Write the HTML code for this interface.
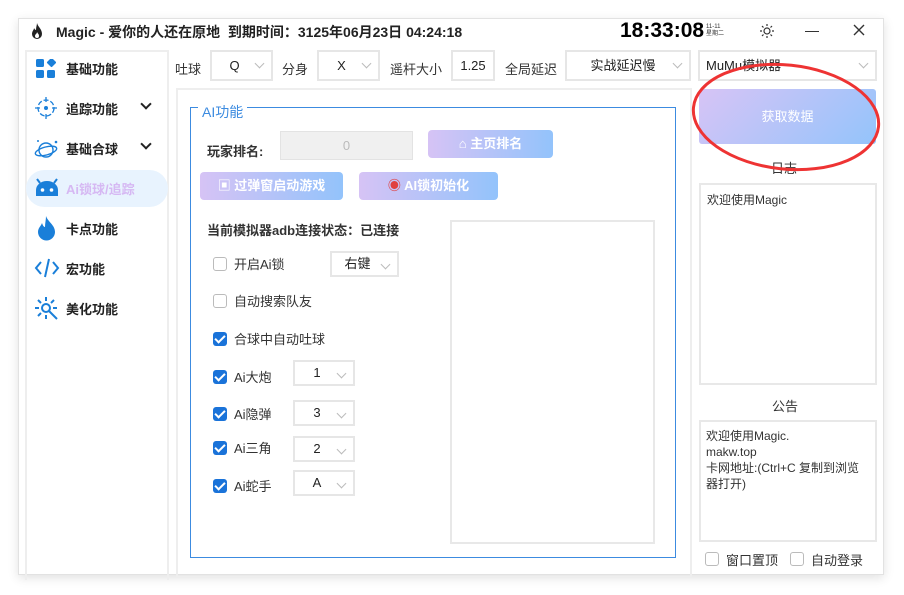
<!DOCTYPE html>
<html><head><meta charset="utf-8"><style>
*{margin:0;padding:0;box-sizing:border-box}
body{width:904px;height:595px;background:#fff;font-family:"Liberation Sans","Noto Sans CJK SC",sans-serif;position:relative;overflow:hidden;color:#222;font-size:13px}
.a{position:absolute}
.win{left:18px;top:18px;width:866px;height:557px;background:#fff;border:1px solid #e2e2e2;box-shadow:0 3px 10px rgba(0,0,0,.12)}
.sel{position:absolute;border:2px solid #e6e6e6;background:#fff;height:31px;font-size:13px;line-height:27px;text-align:center}
.sel:after{content:"";position:absolute;right:8px;top:8px;width:6px;height:6px;border-right:1.3px solid #bbb;border-bottom:1.3px solid #bbb;transform:rotate(45deg)}
.lbl{position:absolute;font-size:13px;color:#333}
.nav{position:absolute;left:66px;font-size:13px;font-weight:bold;color:#222}
.cb{position:absolute;width:14px;height:14px;border:1.5px solid #bbb;border-radius:3px;background:#fff}
.cbk{position:absolute;width:14px;height:14px;border-radius:3px;background:#1a73d9}
.cbk:after{content:"";position:absolute;left:4px;top:1px;width:4px;height:8px;border-right:2px solid #fff;border-bottom:2px solid #fff;transform:rotate(45deg)}
.grad{background:linear-gradient(90deg,#d6c3f5,#93c3fb);color:#fff;font-weight:bold;border-radius:4px;text-align:center;font-size:13px}
.box{position:absolute;border:2px solid #e8e8e8;background:#fff}
</style></head><body>
<div class="a win"></div>
<svg class="a" style="left:30px;top:22px" width="14" height="18" viewBox="0 0 14 18"><path d="M7 1C8 5 12 7 12 12A5 5 0 0 1 2 12C2 9 4 8 4 6C5 8 6 8 6 8C6 5 7 3 7 1Z" fill="#222"/><path d="M7 10C8 12 9 12 9 14A2 2 0 0 1 5 14C5 12 7 12 7 10Z" fill="#fff"/></svg>
<div class="a" style="left:56px;top:22px;font-size:14px;font-weight:bold">Magic - 爱你的人还在原地&nbsp; 到期时间：3125年06月23日 04:24:18</div>
<div class="a" style="left:620px;top:19px;font-size:21px;font-weight:bold;color:#000">18:33:08</div>
<div class="a" style="left:706px;top:24px;font-size:6px;line-height:7px;color:#333">11-11<br>星期二</div>
<svg class="a" style="left:760px;top:24px" width="14" height="14"><circle cx="7" cy="7" r="3" fill="none" stroke="#333" stroke-width="1.2"/><path d="M7 0v2M7 12v2M0 7h2M12 7h2M2 2l1.5 1.5M12 2l-1.5 1.5M2 12l1.5-1.5M12 12l-1.5-1.5" stroke="#333" stroke-width="1.2"/></svg>
<div class="a" style="left:805px;top:31px;width:14px;height:1px;background:#333"></div>
<svg class="a" style="left:853px;top:24px" width="12" height="12"><path d="M1 1L11 11M11 1L1 11" stroke="#333" stroke-width="1.4"/></svg>
<div class="a" style="left:25px;top:50px;width:144px;height:530px;border:2px solid #eee;border-bottom:none"></div>
<div class="a" style="left:26px;top:170px;width:142px;height:37px;border-radius:19px;background:#e8f3fe"></div>
<svg class="a" style="left:36px;top:59px" width="20" height="20"><rect x="0" y="0" width="8" height="8" rx="1.5" fill="#1a7fd9"/><rect x="0" y="11" width="8" height="8" rx="1.5" fill="#1a7fd9"/><rect x="11" y="11" width="8" height="8" rx="1.5" fill="#1a7fd9"/><rect x="12" y="0" width="7" height="7" rx="1" fill="#1a7fd9" transform="rotate(45 15.5 3.5)"/></svg>
<div class="nav" style="top:59px">基础功能</div>
<svg class="a" style="left:35px;top:97px" width="22" height="22"><circle cx="11" cy="11" r="8" fill="none" stroke="#1a7fd9" stroke-width="1.3" stroke-dasharray="5 2"/><circle cx="11" cy="11" r="2" fill="#1a7fd9"/><path d="M11 0v5M11 17v5M0 11h5M17 11h5" stroke="#1a7fd9" stroke-width="1.3"/></svg>
<div class="nav" style="top:99px">追踪功能</div>
<div class="a" style="left:142px;top:100px;width:8px;height:8px;border-right:2px solid #222;border-bottom:2px solid #222;transform:rotate(45deg)"></div>
<svg class="a" style="left:34px;top:137px" width="26" height="24"><circle cx="12" cy="13" r="7" fill="none" stroke="#1a7fd9" stroke-width="1.4"/><ellipse cx="12" cy="14" rx="11" ry="4" fill="none" stroke="#1a7fd9" stroke-width="1.4" transform="rotate(-15 12 14)"/><circle cx="22" cy="5" r="1.3" fill="#1a7fd9"/><circle cx="4" cy="4" r="1" fill="#1a7fd9"/></svg>
<div class="nav" style="top:139px">基础合球</div>
<div class="a" style="left:142px;top:140px;width:8px;height:8px;border-right:2px solid #222;border-bottom:2px solid #222;transform:rotate(45deg)"></div>
<svg class="a" style="left:34px;top:178px" width="26" height="20"><path d="M2 18V12A11 9 0 0 1 24 12V18Z" fill="#1a7fd9"/><path d="M6 5L3 1M20 5L23 1" stroke="#1a7fd9" stroke-width="2"/><circle cx="8.5" cy="12" r="1.8" fill="#fff"/><circle cx="17.5" cy="12" r="1.8" fill="#fff"/></svg>
<div class="nav" style="top:179px;color:#d6b8f3;font-weight:bold">Ai锁球/追踪</div>
<svg class="a" style="left:37px;top:215px" width="20" height="26"><path d="M9 1C11 7 18 10 18 17A8.5 8.5 0 0 1 1 17C1 13 4 11 5 8C6 11 7 12 8 12C8 8 9 5 9 1Z" fill="#1a7fd9"/></svg>
<div class="nav" style="top:219px">卡点功能</div>
<svg class="a" style="left:34px;top:257px" width="26" height="22"><path d="M7 5L2 11L7 17M19 5L24 11L19 17M15 2L11 20" fill="none" stroke="#1a7fd9" stroke-width="2"/></svg>
<div class="nav" style="top:259px">宏功能</div>
<svg class="a" style="left:34px;top:296px" width="26" height="26"><circle cx="12" cy="12" r="4" fill="none" stroke="#1a7fd9" stroke-width="2"/><path d="M15 15L23 23M12 1v4M12 19v4M1 12h4M19 12h4M4 4l3 3M20 4l-3 3M4 20l3-3" stroke="#1a7fd9" stroke-width="2"/></svg>
<div class="nav" style="top:299px">美化功能</div>
<div class="lbl" style="left:175px;top:59px">吐球</div>
<div class="sel" style="left:210px;top:50px;width:63px;padding-right:14px">Q</div>
<div class="lbl" style="left:282px;top:59px">分身</div>
<div class="sel" style="left:317px;top:50px;width:63px;padding-right:14px">X</div>
<div class="lbl" style="left:390px;top:59px">遥杆大小</div>
<div class="a" style="left:451px;top:50px;width:44px;height:31px;background:#fff;border:2px solid #e6e6e6;text-align:center;line-height:27px">1.25</div>
<div class="lbl" style="left:505px;top:59px">全局延迟</div>
<div class="sel" style="left:565px;top:50px;width:126px;padding-right:10px">实战延迟慢</div>
<div class="sel" style="left:698px;top:50px;width:179px;text-align:left;padding-left:6px">MuMu模拟器</div>
<div class="a" style="left:176px;top:88px;width:516px;height:490px;border:2px solid #eee"></div>
<div class="a" style="left:190px;top:107px;width:486px;height:451px;border:1.3px solid #3c8be0"></div>
<div class="a" style="left:198px;top:102px;background:#fff;color:#3c8be0;font-size:14px;padding:0 4px">AI功能</div>
<div class="a" style="left:207px;top:141px;font-size:13px;font-weight:bold;color:#333">玩家排名:</div>
<div class="a" style="left:280px;top:131px;width:133px;height:29px;background:#f0f0f0;border:1.5px solid #e3e3e3;text-align:center;line-height:27px;color:#bbb">0</div>
<div class="a grad" style="left:428px;top:130px;width:125px;height:28px;line-height:28px">⌂ 主页排名</div>
<div class="a grad" style="left:200px;top:172px;width:143px;height:28px;line-height:28px">▣ 过弹窗启动游戏</div>
<div class="a grad" style="left:359px;top:172px;width:139px;height:28px;line-height:28px"><span style="color:#e04040">◉</span> AI锁初始化</div>
<div class="a" style="left:207px;top:220px;font-size:13px;font-weight:bold;color:#333">当前模拟器adb连接状态：已连接</div>
<div class="box" style="left:450px;top:220px;width:205px;height:324px"></div>
<div class="cb" style="left:213px;top:257px"></div><div class="lbl" style="left:234px;top:254px">开启Ai锁</div>
<div class="sel" style="left:330px;top:251px;width:69px;height:26px;line-height:22px;padding-right:14px">右键</div>
<div class="cb" style="left:213px;top:294px"></div><div class="lbl" style="left:234px;top:291px">自动搜索队友</div>
<div class="cbk" style="left:213px;top:332px"></div><div class="lbl" style="left:234px;top:329px">合球中自动吐球</div>
<div class="cbk" style="left:213px;top:370px"></div><div class="lbl" style="left:234px;top:367px">Ai大炮</div>
<div class="sel" style="left:293px;top:360px;width:62px;height:26px;line-height:22px;padding-right:14px">1</div>
<div class="cbk" style="left:213px;top:407px"></div><div class="lbl" style="left:234px;top:404px">Ai隐弹</div>
<div class="sel" style="left:293px;top:400px;width:62px;height:26px;line-height:22px;padding-right:14px">3</div>
<div class="cbk" style="left:213px;top:441px"></div><div class="lbl" style="left:234px;top:438px">Ai三角</div>
<div class="sel" style="left:293px;top:436px;width:62px;height:26px;line-height:22px;padding-right:14px">2</div>
<div class="cbk" style="left:213px;top:479px"></div><div class="lbl" style="left:234px;top:476px">Ai蛇手</div>
<div class="sel" style="left:293px;top:470px;width:62px;height:26px;line-height:22px;padding-right:14px">A</div>
<div class="a" style="left:699px;top:89px;width:177px;height:55px;background:linear-gradient(135deg,#d7c4f6,#94c4fb);color:#fff;text-align:center;line-height:55px;font-size:13px;border-radius:3px">获取数据</div>
<div class="lbl" style="left:771px;top:158px">日志</div>
<div class="box" style="left:699px;top:183px;width:178px;height:202px;padding:6px;font-size:12px;color:#333">欢迎使用Magic</div>
<div class="lbl" style="left:772px;top:396px">公告</div>
<div class="box" style="left:699px;top:420px;width:178px;height:122px;padding:6px 5px;font-size:12px;line-height:16px;color:#333">欢迎使用Magic.<br>makw.top<br>卡网地址:(Ctrl+C 复制到浏览器打开)</div>
<div class="cb" style="left:705px;top:552px"></div><div class="lbl" style="left:726px;top:550px">窗口置顶</div>
<div class="cb" style="left:790px;top:552px"></div><div class="lbl" style="left:811px;top:550px">自动登录</div>
<svg class="a" style="left:690px;top:60px" width="200" height="120"><ellipse cx="96" cy="57" rx="93" ry="52" fill="none" stroke="#ee3333" stroke-width="3" transform="rotate(6 96 57)"/></svg>
</body></html>
